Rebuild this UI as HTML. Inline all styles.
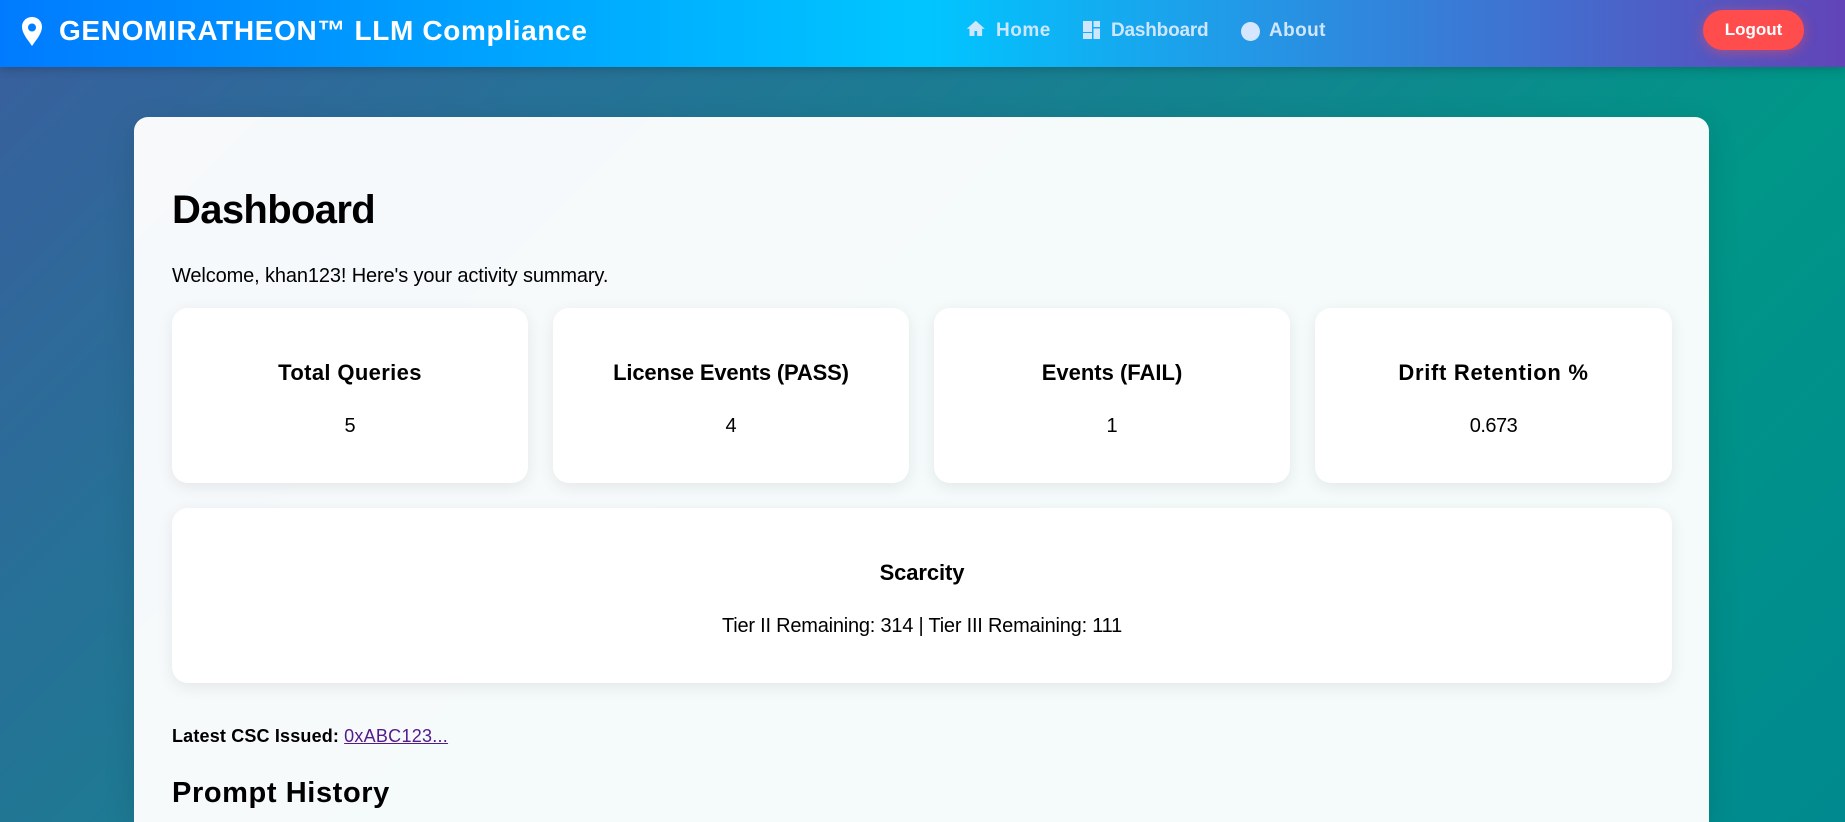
<!DOCTYPE html>
<html lang="en">
<head>
<meta charset="utf-8">
<title>Dashboard</title>
<style>
html,body{margin:0;padding:0;width:1845px;height:822px;overflow:hidden}
body{position:relative;font-family:"Liberation Sans",sans-serif;color:#000}
.bg{position:absolute;left:0;top:0;width:1845px;height:822px;overflow:hidden}
.bg i{position:absolute;left:0;top:0;width:1845px;height:2005px;background:linear-gradient(135deg,#3a5e9e 0%,#009688 50%,#00769a 100%)}
header{position:absolute;left:0;top:0;width:1845px;height:67px;background:linear-gradient(90deg,#007bff 0%,#00c6ff 50%,#6244b8 100%);box-shadow:0 2px 10px rgba(0,0,0,.2);z-index:2}
.t{position:absolute;margin:0;line-height:0;white-space:nowrap}
.logo{left:59px;top:31.300px;font-size:28px;font-weight:700;color:#fff;letter-spacing:.65px}
.nav{top:30.600px;font-size:19px;font-weight:700;color:#cfe6ff}
header svg{position:absolute}
.logout{position:absolute;left:1703px;top:10px;width:101px;height:40px;border-radius:20px;background:#ff4d4d;box-shadow:0 2px 12px rgba(255,77,77,.5)}
.logout span{left:0;width:101px;text-align:center;top:20px;font-size:17px;font-weight:700;color:#fff}
main{position:absolute;left:134px;top:117px;width:1575px;height:705px;border-radius:14px 14px 0 0;background:rgba(255,255,255,.96);box-shadow:0 8px 32px rgba(0,0,0,.12)}
.page{position:absolute;left:0;top:0;width:1845px;height:822px;overflow:hidden}
.card{position:absolute;top:308px;width:356px;height:175px;border-radius:16px;background:#fff;box-shadow:0 4px 16px rgba(0,0,0,.08);text-align:center}
.card h3{left:0;width:100%;top:65.400px;font-size:22px;font-weight:700}
.card p{left:0;width:100%;top:118px;font-size:20px}
a{color:#551a8b;text-decoration:underline}
</style>
</head>
<body>
<div class="bg"><i></i></div>
<header>
  <svg style="left:20px;top:16px" width="24" height="31" viewBox="0 0 24 31"><path fill="#fff" fill-rule="evenodd" d="M12 1C6 1 2 5.500 2 11c0 6.500 6 13 10 19 4-6 10-12.500 10-19C22 5.500 18 1 12 1zm0 6.500a4 4 0 1 1 0 8 4 4 0 0 1 0-8z"/></svg>
  <div class="t logo">GENOMIRATHEON™ LLM Compliance</div>
  <svg style="left:965.200px;top:18.300px" width="21.600" height="21.600" viewBox="0 0 24 24"><path fill="#cfe6ff" d="M10.500 20v-5.500h3V20h5.500v-8h3L12 3 2 12h3v8z"/></svg>
  <span class="t nav" style="left:996px;letter-spacing:.5px">Home</span>
  <svg style="left:1083px;top:21px" width="17" height="18" viewBox="0 0 17 18"><path fill="#cfe6ff" d="M0 0h9v11H0zM0 12h9v6H0zM10.500 0H17v6h-6.500zM10.500 7.500H17V18h-6.500z"/></svg>
  <span class="t nav" style="left:1111px;letter-spacing:-.2px">Dashboard</span>
  <svg style="left:1241px;top:22px" width="19" height="19" viewBox="0 0 19 19"><circle cx="9.500" cy="9.500" r="9.500" fill="#d5e6ff"/></svg>
  <span class="t nav" style="left:1269px;letter-spacing:.4px">About</span>
  <div class="logout"><span class="t">Logout</span></div>
</header>
<main></main>
<div class="page">
  <h1 class="t" style="left:172px;top:210.140px;font-size:40px;font-weight:700;letter-spacing:-.65px">Dashboard</h1>
  <p class="t" style="left:172px;top:276px;font-size:20px;letter-spacing:-.125px">Welcome, khan123! Here's your activity summary.</p>
  <div class="card" style="left:172px"><h3 class="t" style="letter-spacing:.36px">Total Queries</h3><p class="t">5</p></div>
  <div class="card" style="left:553px"><h3 class="t" style="letter-spacing:-.17px">License Events (PASS)</h3><p class="t">4</p></div>
  <div class="card" style="left:934px"><h3 class="t">Events (FAIL)</h3><p class="t">1</p></div>
  <div class="card" style="left:1315px;width:357px"><h3 class="t" style="letter-spacing:.69px">Drift Retention %</h3><p class="t" style="letter-spacing:-.5px">0.673</p></div>
  <div class="card" style="left:172px;top:508px;width:1500px;height:175px"><h3 class="t" style="letter-spacing:-.1px">Scarcity</h3><p class="t" style="letter-spacing:-.22px">Tier II Remaining: 314 | Tier III Remaining: 111</p></div>
  <p class="t" style="left:172px;top:735.760px;font-size:18px"><b style="letter-spacing:.17px">Latest CSC Issued:</b> <a href="#" style="letter-spacing:.26px">0xABC123...</a></p>
  <h2 class="t" style="left:172px;top:792.950px;font-size:29px;font-weight:700;letter-spacing:.6px">Prompt History</h2>
</div>
</body>
</html>
